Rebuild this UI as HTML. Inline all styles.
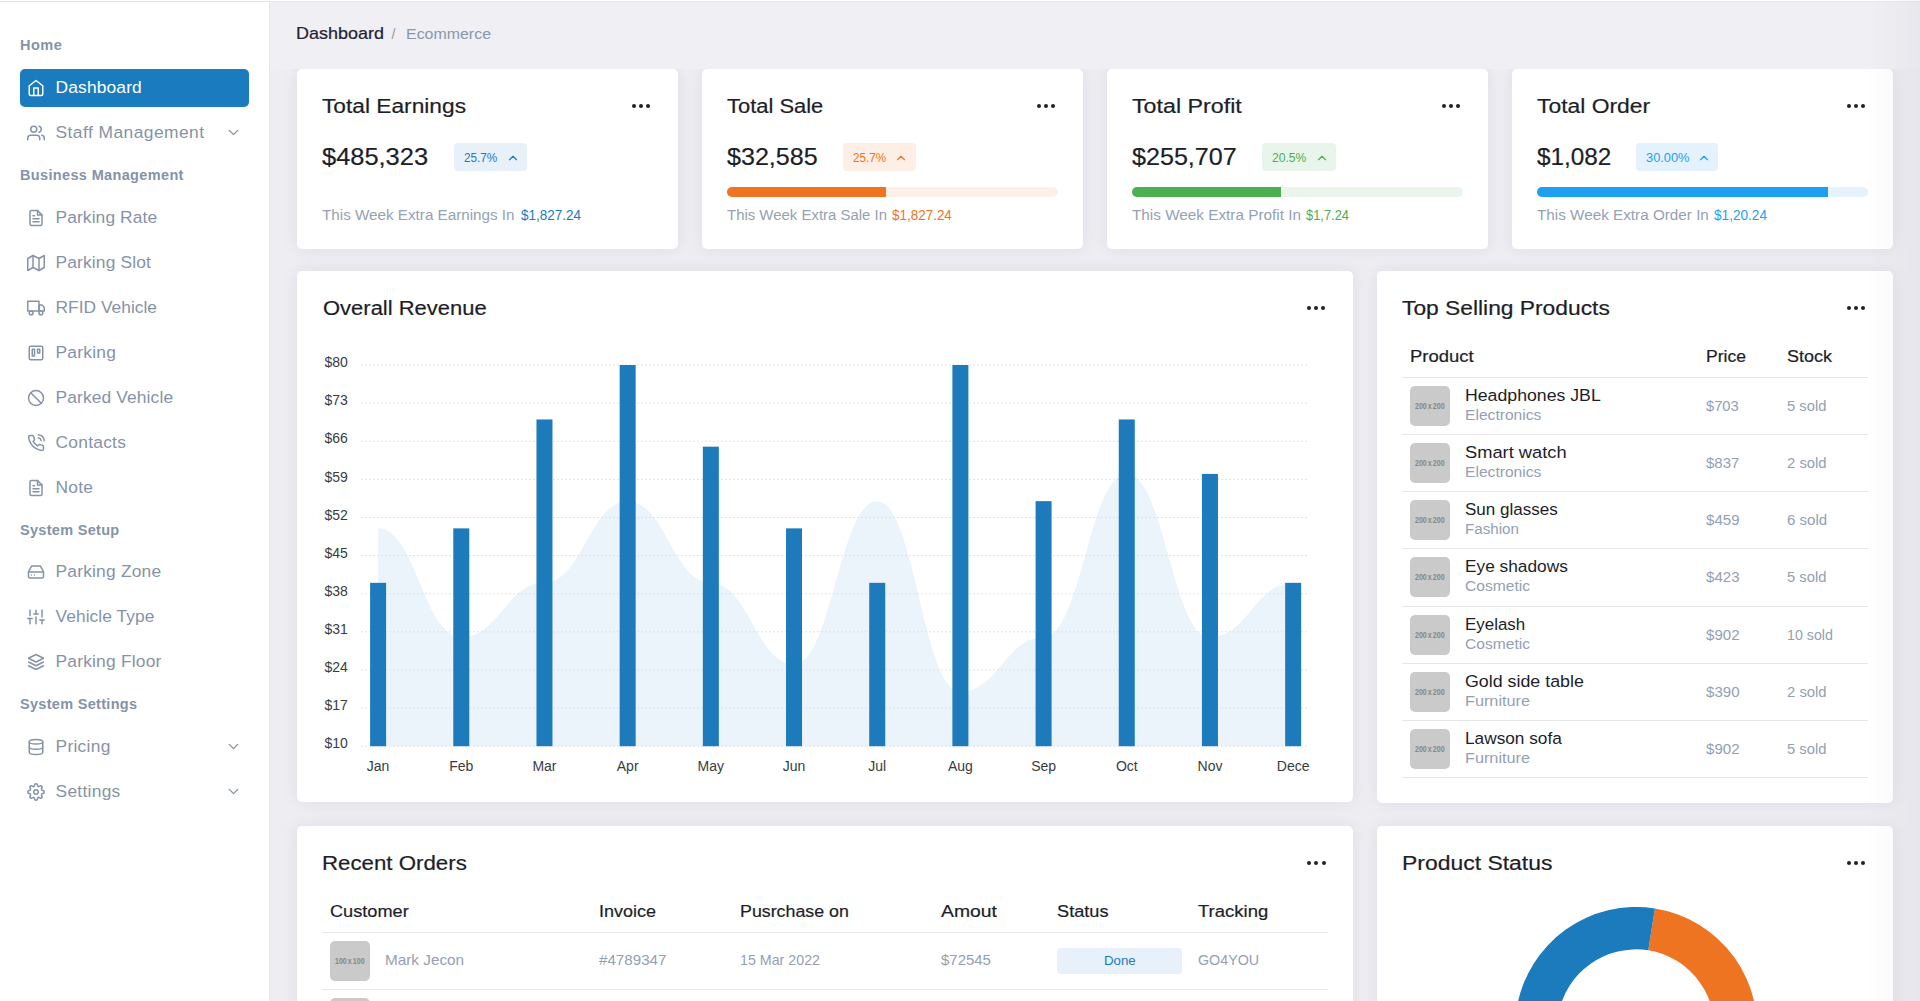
<!DOCTYPE html>
<html><head><meta charset="utf-8"><title>Dashboard</title>
<style>
html,body{margin:0;padding:0;}
body{width:1920px;height:1001px;overflow:hidden;position:relative;background:#ededf2;font-family:"Liberation Sans",sans-serif;}
.t{position:absolute;line-height:1;white-space:nowrap;}
.r{position:absolute;}
.card{position:absolute;background:#fff;border-radius:5px;box-shadow:0 0 16px rgba(40,40,80,0.08);}
svg{position:absolute;overflow:visible;}
</style></head><body>
<div class="r" style="left:0px;top:0px;width:1920px;height:1px;background:#ffffff;"></div>
<div class="r" style="left:0px;top:1px;width:270px;height:1px;background:#e3e3e4;"></div>
<div class="r" style="left:270px;top:1px;width:1650px;height:1px;background:#e8ebf2;"></div>
<div class="r" style="left:0px;top:2px;width:269px;height:999px;background:#ffffff;"></div>
<div class="r" style="left:269px;top:2px;width:1px;height:999px;background:#e7e7ea;"></div>
<div class="t" style="left:20px;top:38px;font-size:14.5px;color:#8493a8;font-weight:700;letter-spacing:0.5px;">Home</div>
<div class="r" style="left:20px;top:69px;width:229px;height:38px;background:#1b7bbf;border-radius:5px;"></div>
<svg style="left:27px;top:79px" width="18" height="18" viewBox="0 0 24 24" fill="none" stroke="#ffffff" stroke-width="2" stroke-linecap="round" stroke-linejoin="round"><path d="M3 9l9-7 9 7v11a2 2 0 0 1-2 2H5a2 2 0 0 1-2-2z"/><polyline points="9 22 9 12 15 12 15 22"/></svg>
<div class="t" style="left:55.5px;top:79px;font-size:17.4px;color:#ffffff;letter-spacing:0.15px;">Dashboard</div>
<svg style="left:27px;top:124.1px" width="18" height="18" viewBox="0 0 24 24" fill="none" stroke="#8693a7" stroke-width="2" stroke-linecap="round" stroke-linejoin="round"><path d="M17 21v-2a4 4 0 0 0-4-4H5a4 4 0 0 0-4 4v2"/><circle cx="9" cy="7" r="4"/><path d="M23 21v-2a4 4 0 0 0-3-3.87"/><path d="M16 3.13a4 4 0 0 1 0 7.75"/></svg>
<div class="t" style="left:55.5px;top:124px;font-size:17.4px;color:#8693a7;letter-spacing:0.45px;">Staff Management</div>
<svg style="left:224.5px;top:124.1px" width="17" height="17" viewBox="0 0 24 24" fill="none" stroke="#8693a7" stroke-width="1.9" stroke-linecap="round" stroke-linejoin="round"><polyline points="6 9 12 15 18 9"/></svg>
<div class="t" style="left:20px;top:168px;font-size:14.5px;color:#8493a8;font-weight:700;letter-spacing:0.35px;">Business Management</div>
<svg style="left:27px;top:208.75px" width="18" height="18" viewBox="0 0 24 24" fill="none" stroke="#8693a7" stroke-width="2" stroke-linecap="round" stroke-linejoin="round"><path d="M14 2H6a2 2 0 0 0-2 2v16a2 2 0 0 0 2 2h12a2 2 0 0 0 2-2V8z"/><polyline points="14 2 14 8 20 8"/><line x1="16" y1="13" x2="8" y2="13"/><line x1="16" y1="17" x2="8" y2="17"/><polyline points="10 9 9 9 8 9"/></svg>
<div class="t" style="left:55.5px;top:209px;font-size:17.4px;color:#8693a7;letter-spacing:0.1px;">Parking Rate</div>
<svg style="left:27px;top:253.89999999999998px" width="18" height="18" viewBox="0 0 24 24" fill="none" stroke="#8693a7" stroke-width="2" stroke-linecap="round" stroke-linejoin="round"><polygon points="1 6 1 22 8 18 16 22 23 18 23 2 16 6 8 2 1 6"/><line x1="8" y1="2" x2="8" y2="18"/><line x1="16" y1="6" x2="16" y2="22"/></svg>
<div class="t" style="left:55.5px;top:254px;font-size:17.4px;color:#8693a7;letter-spacing:0.15px;">Parking Slot</div>
<svg style="left:27px;top:298.9px" width="18" height="18" viewBox="0 0 24 24" fill="none" stroke="#8693a7" stroke-width="2" stroke-linecap="round" stroke-linejoin="round"><rect x="1" y="3" width="15" height="13"/><polygon points="16 8 20 8 23 11 23 16 16 16 16 8"/><circle cx="5.5" cy="18.5" r="2.5"/><circle cx="18.5" cy="18.5" r="2.5"/></svg>
<div class="t" style="left:55.5px;top:299px;font-size:17.4px;color:#8693a7;">RFID Vehicle</div>
<svg style="left:27px;top:343.9px" width="18" height="18" viewBox="0 0 24 24" fill="none" stroke="#8693a7" stroke-width="2" stroke-linecap="round" stroke-linejoin="round"><rect x="3" y="3" width="18" height="18" rx="2" ry="2"/><rect x="7" y="7" width="3" height="9"/><rect x="14" y="7" width="3" height="5"/></svg>
<div class="t" style="left:55.5px;top:344px;font-size:17.4px;color:#8693a7;letter-spacing:0.25px;">Parking</div>
<svg style="left:27px;top:388.9px" width="18" height="18" viewBox="0 0 24 24" fill="none" stroke="#8693a7" stroke-width="2" stroke-linecap="round" stroke-linejoin="round"><circle cx="12" cy="12" r="10"/><line x1="4.93" y1="4.93" x2="19.07" y2="19.07"/></svg>
<div class="t" style="left:55.5px;top:389px;font-size:17.4px;color:#8693a7;letter-spacing:0.12px;">Parked Vehicle</div>
<svg style="left:27px;top:433.8px" width="18" height="18" viewBox="0 0 24 24" fill="none" stroke="#8693a7" stroke-width="2" stroke-linecap="round" stroke-linejoin="round"><path d="M15.05 5A5 5 0 0 1 19 8.95M15.05 1A9 9 0 0 1 23 8.94m-1 7.98v3a2 2 0 0 1-2.18 2 19.79 19.79 0 0 1-8.63-3.070 19.5 19.5 0 0 1-6-6 19.79 19.79 0 0 1-3.07-8.67A2 2 0 0 1 4.11 2h3a2 2 0 0 1 2 1.72 12.84 12.84 0 0 0 .7 2.81 2 2 0 0 1-.45 2.11L8.09 9.91a16 16 0 0 0 6 6l1.27-1.27a2 2 0 0 1 2.11-.45 12.84 12.84 0 0 0 2.81.7A2 2 0 0 1 22 16.92z"/></svg>
<div class="t" style="left:55.5px;top:434px;font-size:17.4px;color:#8693a7;letter-spacing:0.25px;">Contacts</div>
<svg style="left:27px;top:478.9px" width="18" height="18" viewBox="0 0 24 24" fill="none" stroke="#8693a7" stroke-width="2" stroke-linecap="round" stroke-linejoin="round"><path d="M14 2H6a2 2 0 0 0-2 2v16a2 2 0 0 0 2 2h12a2 2 0 0 0 2-2V8z"/><polyline points="14 2 14 8 20 8"/><line x1="16" y1="13" x2="8" y2="13"/><line x1="16" y1="17" x2="8" y2="17"/><polyline points="10 9 9 9 8 9"/></svg>
<div class="t" style="left:55.5px;top:479px;font-size:17.4px;color:#8693a7;letter-spacing:0.2px;">Note</div>
<div class="t" style="left:20px;top:523px;font-size:14.5px;color:#8493a8;font-weight:700;letter-spacing:0.3px;">System Setup</div>
<svg style="left:27px;top:563px" width="18" height="18" viewBox="0 0 24 24" fill="none" stroke="#8693a7" stroke-width="2" stroke-linecap="round" stroke-linejoin="round"><line x1="22" y1="12" x2="2" y2="12"/><path d="M5.45 5.11L2 12v6a2 2 0 0 0 2 2h16a2 2 0 0 0 2-2v-6l-3.45-6.89A2 2 0 0 0 16.76 4H7.24a2 2 0 0 0-1.79 1.11z"/><line x1="6" y1="16" x2="6.01" y2="16"/><line x1="10" y1="16" x2="10.01" y2="16"/></svg>
<div class="t" style="left:55.5px;top:563px;font-size:17.4px;color:#8693a7;letter-spacing:0.2px;">Parking Zone</div>
<svg style="left:27px;top:608.3px" width="18" height="18" viewBox="0 0 24 24" fill="none" stroke="#8693a7" stroke-width="2" stroke-linecap="round" stroke-linejoin="round"><line x1="4" y1="21" x2="4" y2="14"/><line x1="4" y1="10" x2="4" y2="3"/><line x1="12" y1="21" x2="12" y2="12"/><line x1="12" y1="8" x2="12" y2="3"/><line x1="20" y1="21" x2="20" y2="16"/><line x1="20" y1="12" x2="20" y2="3"/><line x1="1" y1="14" x2="7" y2="14"/><line x1="9" y1="8" x2="15" y2="8"/><line x1="17" y1="16" x2="23" y2="16"/></svg>
<div class="t" style="left:55.5px;top:608px;font-size:17.4px;color:#8693a7;letter-spacing:0.05px;">Vehicle Type</div>
<svg style="left:27px;top:653px" width="18" height="18" viewBox="0 0 24 24" fill="none" stroke="#8693a7" stroke-width="2" stroke-linecap="round" stroke-linejoin="round"><polygon points="12 2 2 7 12 12 22 7 12 2"/><polyline points="2 17 12 22 22 17"/><polyline points="2 12 12 17 22 12"/></svg>
<div class="t" style="left:55.5px;top:653px;font-size:17.4px;color:#8693a7;letter-spacing:0.2px;">Parking Floor</div>
<div class="t" style="left:20px;top:697px;font-size:14.5px;color:#8493a8;font-weight:700;letter-spacing:0.3px;">System Settings</div>
<svg style="left:27px;top:738.3px" width="18" height="18" viewBox="0 0 24 24" fill="none" stroke="#8693a7" stroke-width="2" stroke-linecap="round" stroke-linejoin="round"><ellipse cx="12" cy="5" rx="9" ry="3"/><path d="M21 12c0 1.66-4 3-9 3s-9-1.34-9-3"/><path d="M3 5v14c0 1.66 4 3 9 3s9-1.34 9-3V5"/></svg>
<div class="t" style="left:55.5px;top:738px;font-size:17.4px;color:#8693a7;letter-spacing:0.28px;">Pricing</div>
<svg style="left:224.5px;top:738.3px" width="17" height="17" viewBox="0 0 24 24" fill="none" stroke="#8693a7" stroke-width="1.9" stroke-linecap="round" stroke-linejoin="round"><polyline points="6 9 12 15 18 9"/></svg>
<svg style="left:27px;top:783.3px" width="18" height="18" viewBox="0 0 24 24" fill="none" stroke="#8693a7" stroke-width="2" stroke-linecap="round" stroke-linejoin="round"><circle cx="12" cy="12" r="3"/><path d="M19.4 15a1.65 1.65 0 0 0 .33 1.82l.06.06a2 2 0 0 1 0 2.830 2 2 0 0 1-2.83 0l-.06-.06a1.65 1.65 0 0 0-1.82-.33 1.65 1.65 0 0 0-1 1.51V21a2 2 0 0 1-2 2 2 2 0 0 1-2-2v-.09A1.65 1.65 0 0 0 9 19.4a1.65 1.65 0 0 0-1.82.33l-.06.06a2 2 0 0 1-2.83 0 2 2 0 0 1 0-2.83l.06-.06a1.65 1.65 0 0 0 .33-1.82 1.65 1.65 0 0 0-1.51-1H3a2 2 0 0 1-2-2 2 2 0 0 1 2-2h.09A1.65 1.65 0 0 0 4.6 9a1.65 1.65 0 0 0-.33-1.82l-.06-.06a2 2 0 0 1 0-2.83 2 2 0 0 1 2.83 0l.06.06a1.65 1.65 0 0 0 1.82.33H9a1.65 1.65 0 0 0 1-1.51V3a2 2 0 0 1 2-2 2 2 0 0 1 2 2v.09a1.65 1.65 0 0 0 1 1.51 1.65 1.65 0 0 0 1.82-.33l.06-.06a2 2 0 0 1 2.83 0 2 2 0 0 1 0 2.83l-.06.06a1.65 1.65 0 0 0-.33 1.82V9a1.65 1.65 0 0 0 1.51 1H21a2 2 0 0 1 2 2 2 2 0 0 1-2 2h-.09a1.65 1.65 0 0 0-1.51 1z"/></svg>
<div class="t" style="left:55.5px;top:783px;font-size:17.4px;color:#8693a7;letter-spacing:0.28px;">Settings</div>
<svg style="left:224.5px;top:783.3px" width="17" height="17" viewBox="0 0 24 24" fill="none" stroke="#8693a7" stroke-width="1.9" stroke-linecap="round" stroke-linejoin="round"><polyline points="6 9 12 15 18 9"/></svg>
<div class="card" style="left:297px;top:69px;width:381px;height:180px"></div>
<div class="t" style="left:322.0px;top:96px;font-size:20px;color:#1d1e28;-webkit-text-stroke:0.2px currentColor;transform:scaleX(1.1361);transform-origin:0 0;">Total Earnings</div>
<div class="r" style="left:631.90px;top:103.80px;width:4px;height:4px;border-radius:50%;background:#222"></div>
<div class="r" style="left:639.00px;top:103.80px;width:4px;height:4px;border-radius:50%;background:#222"></div>
<div class="r" style="left:646.10px;top:103.80px;width:4px;height:4px;border-radius:50%;background:#222"></div>
<div class="t" style="left:322.4px;top:145px;font-size:24px;color:#1d1e28;-webkit-text-stroke:0.2px currentColor;transform:scaleX(1.0592);transform-origin:0 0;">$485,323</div>
<div class="r" style="left:454.2px;top:143px;width:72.8px;height:28px;background:#e8f1f9;border-radius:4px;"></div>
<div class="t" style="left:464.2px;top:152px;font-size:12.3px;color:#1b7bbf;transform:scaleX(0.9550);transform-origin:0 0;">25.7%</div>
<svg style="left:505.85px;top:150.75px" width="14" height="14" viewBox="0 0 24 24" fill="none" stroke="#1b7bbf" stroke-width="2" stroke-linecap="round" stroke-linejoin="round"><polyline points="18 15 12 9 6 15"/></svg>
<div class="t" style="left:322.3px;top:207px;font-size:15.2px;color:#95a1b4;transform:scaleX(1.0020);transform-origin:0 0;">This Week Extra Earnings In</div>
<div class="t" style="left:520.7px;top:207px;font-size:15.2px;color:#1b7bbf;transform:scaleX(0.8900);transform-origin:0 0;">$1,827.24</div>
<div class="card" style="left:702px;top:69px;width:381px;height:180px"></div>
<div class="t" style="left:727.0px;top:96px;font-size:20px;color:#1d1e28;-webkit-text-stroke:0.2px currentColor;transform:scaleX(1.0962);transform-origin:0 0;">Total Sale</div>
<div class="r" style="left:1036.90px;top:103.80px;width:4px;height:4px;border-radius:50%;background:#222"></div>
<div class="r" style="left:1044.00px;top:103.80px;width:4px;height:4px;border-radius:50%;background:#222"></div>
<div class="r" style="left:1051.10px;top:103.80px;width:4px;height:4px;border-radius:50%;background:#222"></div>
<div class="t" style="left:727.4px;top:145px;font-size:24px;color:#1d1e28;-webkit-text-stroke:0.2px currentColor;transform:scaleX(1.0454);transform-origin:0 0;">$32,585</div>
<div class="r" style="left:843.1px;top:143px;width:72.5px;height:28px;background:#fdefe6;border-radius:4px;"></div>
<div class="t" style="left:853.1px;top:152px;font-size:12.3px;color:#ee7421;transform:scaleX(0.9464);transform-origin:0 0;">25.7%</div>
<svg style="left:894.45px;top:150.75px" width="14" height="14" viewBox="0 0 24 24" fill="none" stroke="#ee7421" stroke-width="2" stroke-linecap="round" stroke-linejoin="round"><polyline points="18 15 12 9 6 15"/></svg>
<div class="r" style="left:727px;top:187px;width:331px;height:10px;background:#fdf0e7;border-radius:5px;"></div>
<div class="r" style="left:727px;top:187px;width:159px;height:10px;background:#ee7421;border-radius:5px;border-top-right-radius:0;border-bottom-right-radius:0;"></div>
<div class="t" style="left:727.0px;top:207px;font-size:15.2px;color:#95a1b4;transform:scaleX(0.9837);transform-origin:0 0;">This Week Extra Sale In</div>
<div class="t" style="left:892.4px;top:207px;font-size:15.2px;color:#ee7421;transform:scaleX(0.8856);transform-origin:0 0;">$1,827.24</div>
<div class="card" style="left:1107px;top:69px;width:381px;height:180px"></div>
<div class="t" style="left:1132.0px;top:96px;font-size:20px;color:#1d1e28;-webkit-text-stroke:0.2px currentColor;transform:scaleX(1.1619);transform-origin:0 0;">Total Profit</div>
<div class="r" style="left:1441.90px;top:103.80px;width:4px;height:4px;border-radius:50%;background:#222"></div>
<div class="r" style="left:1449.00px;top:103.80px;width:4px;height:4px;border-radius:50%;background:#222"></div>
<div class="r" style="left:1456.10px;top:103.80px;width:4px;height:4px;border-radius:50%;background:#222"></div>
<div class="t" style="left:1132.4px;top:145px;font-size:24px;color:#1d1e28;-webkit-text-stroke:0.2px currentColor;transform:scaleX(1.0462);transform-origin:0 0;">$255,707</div>
<div class="r" style="left:1262.3px;top:143px;width:73.5px;height:28px;background:#e9f5ea;border-radius:4px;"></div>
<div class="t" style="left:1272.3px;top:152px;font-size:12.3px;color:#4caf50;transform:scaleX(0.9836);transform-origin:0 0;">20.5%</div>
<svg style="left:1314.65px;top:150.75px" width="14" height="14" viewBox="0 0 24 24" fill="none" stroke="#4caf50" stroke-width="2" stroke-linecap="round" stroke-linejoin="round"><polyline points="18 15 12 9 6 15"/></svg>
<div class="r" style="left:1132px;top:187px;width:331px;height:10px;background:#ebf5ec;border-radius:5px;"></div>
<div class="r" style="left:1132px;top:187px;width:149px;height:10px;background:#4caf50;border-radius:5px;border-top-right-radius:0;border-bottom-right-radius:0;"></div>
<div class="t" style="left:1132.0px;top:207px;font-size:15.2px;color:#95a1b4;transform:scaleX(1.0077);transform-origin:0 0;">This Week Extra Profit In</div>
<div class="t" style="left:1306.4px;top:207px;font-size:15.2px;color:#4caf50;transform:scaleX(0.8476);transform-origin:0 0;">$1,7.24</div>
<div class="card" style="left:1512px;top:69px;width:381px;height:180px"></div>
<div class="t" style="left:1537.0px;top:96px;font-size:20px;color:#1d1e28;-webkit-text-stroke:0.2px currentColor;transform:scaleX(1.1440);transform-origin:0 0;">Total Order</div>
<div class="r" style="left:1846.90px;top:103.80px;width:4px;height:4px;border-radius:50%;background:#222"></div>
<div class="r" style="left:1854.00px;top:103.80px;width:4px;height:4px;border-radius:50%;background:#222"></div>
<div class="r" style="left:1861.10px;top:103.80px;width:4px;height:4px;border-radius:50%;background:#222"></div>
<div class="t" style="left:1537.4px;top:145px;font-size:24px;color:#1d1e28;-webkit-text-stroke:0.2px currentColor;transform:scaleX(1.0125);transform-origin:0 0;">$1,082</div>
<div class="r" style="left:1636.1px;top:143px;width:82.4px;height:28px;background:#e3f2fd;border-radius:4px;"></div>
<div class="t" style="left:1646.1px;top:152px;font-size:12.3px;color:#1e9ff2;transform:scaleX(1.0425);transform-origin:0 0;">30.00%</div>
<svg style="left:1697.35px;top:150.75px" width="14" height="14" viewBox="0 0 24 24" fill="none" stroke="#1e9ff2" stroke-width="2" stroke-linecap="round" stroke-linejoin="round"><polyline points="18 15 12 9 6 15"/></svg>
<div class="r" style="left:1537px;top:187px;width:331px;height:10px;background:#e6f3fd;border-radius:5px;"></div>
<div class="r" style="left:1537px;top:187px;width:291px;height:10px;background:#1e9ff2;border-radius:5px;border-top-right-radius:0;border-bottom-right-radius:0;"></div>
<div class="t" style="left:1537.0px;top:207px;font-size:15.2px;color:#95a1b4;transform:scaleX(1.0047);transform-origin:0 0;">This Week Extra Order In</div>
<div class="t" style="left:1714.1px;top:207px;font-size:15.2px;color:#1e9ff2;transform:scaleX(0.8958);transform-origin:0 0;">$1,20.24</div>
<div class="card" style="left:297px;top:271px;width:1056px;height:531px"></div>
<div class="t" style="left:322.5px;top:298px;font-size:20px;color:#1d1e28;-webkit-text-stroke:0.2px currentColor;transform:scaleX(1.0990);transform-origin:0 0;">Overall Revenue</div>
<div class="r" style="left:1307.20px;top:305.80px;width:4px;height:4px;border-radius:50%;background:#222"></div>
<div class="r" style="left:1314.30px;top:305.80px;width:4px;height:4px;border-radius:50%;background:#222"></div>
<div class="r" style="left:1321.40px;top:305.80px;width:4px;height:4px;border-radius:50%;background:#222"></div>
<svg style="left:0;top:0" width="1920" height="1001"><path d="M378.10,528.37 C415.53,528.37 423.85,637.29 461.29,637.29 C498.72,637.29 507.04,582.83 544.47,582.83 C581.91,582.83 590.22,501.14 627.66,501.14 C665.09,501.14 673.41,582.83 710.84,582.83 C748.28,582.83 756.60,664.51 794.03,664.51 C831.46,664.51 839.78,501.14 877.22,501.14 C914.65,501.14 922.97,691.74 960.40,691.74 C997.84,691.74 1006.15,637.29 1043.59,637.29 C1081.02,637.29 1089.34,473.91 1126.77,473.91 C1164.21,473.91 1172.53,637.29 1209.96,637.29 C1247.39,637.29 1255.71,582.83 1293.15,582.83 L1293.15,746.2 L378.10,746.2 Z" fill="#ebf3fb"/><line x1="361" y1="365.00" x2="1308" y2="365.00" stroke="#e2e2e2" stroke-width="1" stroke-dasharray="2,2"/><line x1="361" y1="403.12" x2="1308" y2="403.12" stroke="#e2e2e2" stroke-width="1" stroke-dasharray="2,2"/><line x1="361" y1="441.24" x2="1308" y2="441.24" stroke="#e2e2e2" stroke-width="1" stroke-dasharray="2,2"/><line x1="361" y1="479.36" x2="1308" y2="479.36" stroke="#e2e2e2" stroke-width="1" stroke-dasharray="2,2"/><line x1="361" y1="517.48" x2="1308" y2="517.48" stroke="#e2e2e2" stroke-width="1" stroke-dasharray="2,2"/><line x1="361" y1="555.60" x2="1308" y2="555.60" stroke="#e2e2e2" stroke-width="1" stroke-dasharray="2,2"/><line x1="361" y1="593.72" x2="1308" y2="593.72" stroke="#e2e2e2" stroke-width="1" stroke-dasharray="2,2"/><line x1="361" y1="631.84" x2="1308" y2="631.84" stroke="#e2e2e2" stroke-width="1" stroke-dasharray="2,2"/><line x1="361" y1="669.96" x2="1308" y2="669.96" stroke="#e2e2e2" stroke-width="1" stroke-dasharray="2,2"/><line x1="361" y1="708.08" x2="1308" y2="708.08" stroke="#e2e2e2" stroke-width="1" stroke-dasharray="2,2"/><line x1="361" y1="746.20" x2="1308" y2="746.20" stroke="#e2e2e2" stroke-width="1" stroke-dasharray="2,2"/><rect x="370.10" y="582.83" width="16" height="163.37" fill="#1d7bbc"/><rect x="453.29" y="528.37" width="16" height="217.83" fill="#1d7bbc"/><rect x="536.47" y="419.46" width="16" height="326.74" fill="#1d7bbc"/><rect x="619.66" y="365.00" width="16" height="381.20" fill="#1d7bbc"/><rect x="702.84" y="446.69" width="16" height="299.51" fill="#1d7bbc"/><rect x="786.03" y="528.37" width="16" height="217.83" fill="#1d7bbc"/><rect x="869.22" y="582.83" width="16" height="163.37" fill="#1d7bbc"/><rect x="952.40" y="365.00" width="16" height="381.20" fill="#1d7bbc"/><rect x="1035.59" y="501.14" width="16" height="245.06" fill="#1d7bbc"/><rect x="1118.77" y="419.46" width="16" height="326.74" fill="#1d7bbc"/><rect x="1201.96" y="473.91" width="16" height="272.29" fill="#1d7bbc"/><rect x="1285.15" y="582.83" width="16" height="163.37" fill="#1d7bbc"/></svg>
<div class="t" style="left:324.4px;top:355px;font-size:14px;color:#373d3f;">$80</div>
<div class="t" style="left:324.4px;top:393px;font-size:14px;color:#373d3f;">$73</div>
<div class="t" style="left:324.4px;top:431px;font-size:14px;color:#373d3f;">$66</div>
<div class="t" style="left:324.4px;top:470px;font-size:14px;color:#373d3f;">$59</div>
<div class="t" style="left:324.4px;top:508px;font-size:14px;color:#373d3f;">$52</div>
<div class="t" style="left:324.4px;top:546px;font-size:14px;color:#373d3f;">$45</div>
<div class="t" style="left:324.4px;top:584px;font-size:14px;color:#373d3f;">$38</div>
<div class="t" style="left:324.4px;top:622px;font-size:14px;color:#373d3f;">$31</div>
<div class="t" style="left:324.4px;top:660px;font-size:14px;color:#373d3f;">$24</div>
<div class="t" style="left:324.4px;top:698px;font-size:14px;color:#373d3f;">$17</div>
<div class="t" style="left:324.4px;top:736px;font-size:14px;color:#373d3f;">$10</div>
<div class="t" style="left:366.81px;top:759px;font-size:14px;color:#373d3f;">Jan</div>
<div class="t" style="left:449.23px;top:759px;font-size:14px;color:#373d3f;">Feb</div>
<div class="t" style="left:532.41px;top:759px;font-size:14px;color:#373d3f;">Mar</div>
<div class="t" style="left:616.77px;top:759px;font-size:14px;color:#373d3f;">Apr</div>
<div class="t" style="left:697.61px;top:759px;font-size:14px;color:#373d3f;">May</div>
<div class="t" style="left:782.74px;top:759px;font-size:14px;color:#373d3f;">Jun</div>
<div class="t" style="left:868.27px;top:759px;font-size:14px;color:#373d3f;">Jul</div>
<div class="t" style="left:947.94px;top:759px;font-size:14px;color:#373d3f;">Aug</div>
<div class="t" style="left:1031.13px;top:759px;font-size:14px;color:#373d3f;">Sep</div>
<div class="t" style="left:1115.89px;top:759px;font-size:14px;color:#373d3f;">Oct</div>
<div class="t" style="left:1197.52px;top:759px;font-size:14px;color:#373d3f;">Nov</div>
<div class="t" style="left:1276.8px;top:759px;font-size:14px;color:#373d3f;">Dece</div>
<div class="card" style="left:1377px;top:271px;width:516px;height:532px"></div>
<div class="t" style="left:1402.2px;top:298px;font-size:20px;color:#1d1e28;-webkit-text-stroke:0.2px currentColor;transform:scaleX(1.1396);transform-origin:0 0;">Top Selling Products</div>
<div class="r" style="left:1846.90px;top:305.80px;width:4px;height:4px;border-radius:50%;background:#222"></div>
<div class="r" style="left:1854.00px;top:305.80px;width:4px;height:4px;border-radius:50%;background:#222"></div>
<div class="r" style="left:1861.10px;top:305.80px;width:4px;height:4px;border-radius:50%;background:#222"></div>
<div class="t" style="left:1409.8px;top:348px;font-size:16.3px;color:#1d1e28;-webkit-text-stroke:0.2px currentColor;transform:scaleX(1.1336);transform-origin:0 0;">Product</div>
<div class="t" style="left:1706.0px;top:348px;font-size:16.3px;color:#1d1e28;-webkit-text-stroke:0.2px currentColor;transform:scaleX(1.0775);transform-origin:0 0;">Price</div>
<div class="t" style="left:1786.8px;top:348px;font-size:16.3px;color:#1d1e28;-webkit-text-stroke:0.2px currentColor;transform:scaleX(1.1032);transform-origin:0 0;">Stock</div>
<div class="r" style="left:1402px;top:377px;width:466px;height:1px;background:#e6e6e9;"></div>
<div class="r" style="left:1402px;top:434px;width:466px;height:1px;background:#e6e6e9;"></div>
<div class="r" style="left:1410px;top:386px;width:40px;height:40px;background:#cacaca;border-radius:5px"></div>
<div class="t" style="left:1415.45px;top:402px;font-size:8.8px;color:#878787;font-weight:700;transform:scaleX(0.8047);transform-origin:0 0;">200<span style="letter-spacing:-1.2px"> </span>x<span style="letter-spacing:-1.2px"> </span>200</div>
<div class="t" style="left:1464.8px;top:387px;font-size:17.4px;color:#1d1e28;transform:scaleX(1.0172);transform-origin:0 0;">Headphones JBL</div>
<div class="t" style="left:1464.8px;top:407px;font-size:15.3px;color:#94a0b2;transform:scaleX(1.0212);transform-origin:0 0;">Electronics</div>
<div class="t" style="left:1706.0px;top:398px;font-size:15.1px;color:#94a0b2;transform:scaleX(0.9733);transform-origin:0 0;">$703</div>
<div class="t" style="left:1786.8px;top:398px;font-size:15.1px;color:#94a0b2;transform:scaleX(0.9782);transform-origin:0 0;">5 sold</div>
<div class="r" style="left:1402px;top:491px;width:466px;height:1px;background:#e6e6e9;"></div>
<div class="r" style="left:1410px;top:443px;width:40px;height:40px;background:#cacaca;border-radius:5px"></div>
<div class="t" style="left:1415.45px;top:459px;font-size:8.8px;color:#878787;font-weight:700;transform:scaleX(0.8047);transform-origin:0 0;">200<span style="letter-spacing:-1.2px"> </span>x<span style="letter-spacing:-1.2px"> </span>200</div>
<div class="t" style="left:1464.8px;top:444px;font-size:17.4px;color:#1d1e28;transform:scaleX(1.0517);transform-origin:0 0;">Smart watch</div>
<div class="t" style="left:1464.8px;top:464px;font-size:15.3px;color:#94a0b2;transform:scaleX(1.0212);transform-origin:0 0;">Electronics</div>
<div class="t" style="left:1706.0px;top:455px;font-size:15.1px;color:#94a0b2;transform:scaleX(0.9941);transform-origin:0 0;">$837</div>
<div class="t" style="left:1786.8px;top:455px;font-size:15.1px;color:#94a0b2;transform:scaleX(0.9831);transform-origin:0 0;">2 sold</div>
<div class="r" style="left:1402px;top:548px;width:466px;height:1px;background:#e6e6e9;"></div>
<div class="r" style="left:1410px;top:500px;width:40px;height:40px;background:#cacaca;border-radius:5px"></div>
<div class="t" style="left:1415.45px;top:516px;font-size:8.8px;color:#878787;font-weight:700;transform:scaleX(0.8047);transform-origin:0 0;">200<span style="letter-spacing:-1.2px"> </span>x<span style="letter-spacing:-1.2px"> </span>200</div>
<div class="t" style="left:1464.8px;top:501px;font-size:17.4px;color:#1d1e28;transform:scaleX(0.9801);transform-origin:0 0;">Sun glasses</div>
<div class="t" style="left:1464.8px;top:521px;font-size:15.3px;color:#94a0b2;transform:scaleX(0.9921);transform-origin:0 0;">Fashion</div>
<div class="t" style="left:1706.0px;top:512px;font-size:15.1px;color:#94a0b2;transform:scaleX(1.0001);transform-origin:0 0;">$459</div>
<div class="t" style="left:1786.8px;top:512px;font-size:15.1px;color:#94a0b2;transform:scaleX(0.9980);transform-origin:0 0;">6 sold</div>
<div class="r" style="left:1402px;top:606px;width:466px;height:1px;background:#e6e6e9;"></div>
<div class="r" style="left:1410px;top:557px;width:40px;height:40px;background:#cacaca;border-radius:5px"></div>
<div class="t" style="left:1415.45px;top:573px;font-size:8.8px;color:#878787;font-weight:700;transform:scaleX(0.8047);transform-origin:0 0;">200<span style="letter-spacing:-1.2px"> </span>x<span style="letter-spacing:-1.2px"> </span>200</div>
<div class="t" style="left:1464.8px;top:558px;font-size:17.4px;color:#1d1e28;transform:scaleX(0.9943);transform-origin:0 0;">Eye shadows</div>
<div class="t" style="left:1464.8px;top:578px;font-size:15.3px;color:#94a0b2;transform:scaleX(1.0194);transform-origin:0 0;">Cosmetic</div>
<div class="t" style="left:1706.0px;top:569px;font-size:15.1px;color:#94a0b2;transform:scaleX(1.0001);transform-origin:0 0;">$423</div>
<div class="t" style="left:1786.8px;top:569px;font-size:15.1px;color:#94a0b2;transform:scaleX(0.9782);transform-origin:0 0;">5 sold</div>
<div class="r" style="left:1402px;top:663px;width:466px;height:1px;background:#e6e6e9;"></div>
<div class="r" style="left:1410px;top:615px;width:40px;height:40px;background:#cacaca;border-radius:5px"></div>
<div class="t" style="left:1415.45px;top:631px;font-size:8.8px;color:#878787;font-weight:700;transform:scaleX(0.8047);transform-origin:0 0;">200<span style="letter-spacing:-1.2px"> </span>x<span style="letter-spacing:-1.2px"> </span>200</div>
<div class="t" style="left:1464.8px;top:616px;font-size:17.4px;color:#1d1e28;transform:scaleX(0.9725);transform-origin:0 0;">Eyelash</div>
<div class="t" style="left:1464.8px;top:636px;font-size:15.3px;color:#94a0b2;transform:scaleX(1.0194);transform-origin:0 0;">Cosmetic</div>
<div class="t" style="left:1706.0px;top:627px;font-size:15.1px;color:#94a0b2;transform:scaleX(1.0001);transform-origin:0 0;">$902</div>
<div class="t" style="left:1786.8px;top:627px;font-size:15.1px;color:#94a0b2;transform:scaleX(0.9426);transform-origin:0 0;">10 sold</div>
<div class="r" style="left:1402px;top:720px;width:466px;height:1px;background:#e6e6e9;"></div>
<div class="r" style="left:1410px;top:672px;width:40px;height:40px;background:#cacaca;border-radius:5px"></div>
<div class="t" style="left:1415.45px;top:688px;font-size:8.8px;color:#878787;font-weight:700;transform:scaleX(0.8047);transform-origin:0 0;">200<span style="letter-spacing:-1.2px"> </span>x<span style="letter-spacing:-1.2px"> </span>200</div>
<div class="t" style="left:1464.8px;top:673px;font-size:17.4px;color:#1d1e28;transform:scaleX(1.0245);transform-origin:0 0;">Gold side table</div>
<div class="t" style="left:1464.8px;top:693px;font-size:15.3px;color:#94a0b2;transform:scaleX(1.0614);transform-origin:0 0;">Furniture</div>
<div class="t" style="left:1706.0px;top:684px;font-size:15.1px;color:#94a0b2;transform:scaleX(1.0001);transform-origin:0 0;">$390</div>
<div class="t" style="left:1786.8px;top:684px;font-size:15.1px;color:#94a0b2;transform:scaleX(0.9831);transform-origin:0 0;">2 sold</div>
<div class="r" style="left:1402px;top:777px;width:466px;height:1px;background:#e6e6e9;"></div>
<div class="r" style="left:1410px;top:729px;width:40px;height:40px;background:#cacaca;border-radius:5px"></div>
<div class="t" style="left:1415.45px;top:745px;font-size:8.8px;color:#878787;font-weight:700;transform:scaleX(0.8047);transform-origin:0 0;">200<span style="letter-spacing:-1.2px"> </span>x<span style="letter-spacing:-1.2px"> </span>200</div>
<div class="t" style="left:1464.8px;top:730px;font-size:17.4px;color:#1d1e28;transform:scaleX(0.9914);transform-origin:0 0;">Lawson sofa</div>
<div class="t" style="left:1464.8px;top:750px;font-size:15.3px;color:#94a0b2;transform:scaleX(1.0614);transform-origin:0 0;">Furniture</div>
<div class="t" style="left:1706.0px;top:741px;font-size:15.1px;color:#94a0b2;transform:scaleX(1.0001);transform-origin:0 0;">$902</div>
<div class="t" style="left:1786.8px;top:741px;font-size:15.1px;color:#94a0b2;transform:scaleX(0.9782);transform-origin:0 0;">5 sold</div>
<div class="card" style="left:297px;top:826px;width:1056px;height:260px"></div>
<div class="t" style="left:322.3px;top:853px;font-size:20px;color:#1d1e28;-webkit-text-stroke:0.2px currentColor;transform:scaleX(1.1134);transform-origin:0 0;">Recent Orders</div>
<div class="r" style="left:1307.30px;top:860.90px;width:4px;height:4px;border-radius:50%;background:#222"></div>
<div class="r" style="left:1314.40px;top:860.90px;width:4px;height:4px;border-radius:50%;background:#222"></div>
<div class="r" style="left:1321.50px;top:860.90px;width:4px;height:4px;border-radius:50%;background:#222"></div>
<div class="t" style="left:330.3px;top:903px;font-size:16.3px;color:#1d1e28;-webkit-text-stroke:0.2px currentColor;transform:scaleX(1.1152);transform-origin:0 0;">Customer</div>
<div class="t" style="left:599.3px;top:903px;font-size:16.3px;color:#1d1e28;-webkit-text-stroke:0.2px currentColor;transform:scaleX(1.1040);transform-origin:0 0;">Invoice</div>
<div class="t" style="left:740.0px;top:903px;font-size:16.3px;color:#1d1e28;-webkit-text-stroke:0.2px currentColor;transform:scaleX(1.0936);transform-origin:0 0;">Pusrchase on</div>
<div class="t" style="left:941.0px;top:903px;font-size:16.3px;color:#1d1e28;-webkit-text-stroke:0.2px currentColor;transform:scaleX(1.1867);transform-origin:0 0;">Amout</div>
<div class="t" style="left:1057.2px;top:903px;font-size:16.3px;color:#1d1e28;-webkit-text-stroke:0.2px currentColor;transform:scaleX(1.1166);transform-origin:0 0;">Status</div>
<div class="t" style="left:1197.8px;top:903px;font-size:16.3px;color:#1d1e28;-webkit-text-stroke:0.2px currentColor;transform:scaleX(1.1357);transform-origin:0 0;">Tracking</div>
<div class="r" style="left:322px;top:932px;width:1006px;height:1px;background:#e6e6e9;"></div>
<div class="r" style="left:330px;top:941px;width:40px;height:40px;background:#cacaca;border-radius:5px"></div>
<div class="t" style="left:335.45px;top:957px;font-size:8.8px;color:#878787;font-weight:700;transform:scaleX(0.8047);transform-origin:0 0;">100<span style="letter-spacing:-1.2px"> </span>x<span style="letter-spacing:-1.2px"> </span>100</div>
<div class="t" style="left:384.9px;top:952px;font-size:15.0px;color:#94a0b2;transform:scaleX(1.0205);transform-origin:0 0;">Mark Jecon</div>
<div class="t" style="left:599.3px;top:952px;font-size:15.0px;color:#94a0b2;transform:scaleX(1.0112);transform-origin:0 0;">#4789347</div>
<div class="t" style="left:740.0px;top:952px;font-size:15.0px;color:#94a0b2;transform:scaleX(0.9498);transform-origin:0 0;">15 Mar 2022</div>
<div class="t" style="left:941.0px;top:952px;font-size:15.0px;color:#94a0b2;transform:scaleX(0.9968);transform-origin:0 0;">$72545</div>
<div class="r" style="left:1057px;top:948px;width:124.5px;height:26px;background:#e8f1f9;border-radius:4px;"></div>
<div class="t" style="left:1104.0px;top:955px;font-size:12px;color:#1b7bbf;transform:scaleX(1.1053);transform-origin:0 0;">Done</div>
<div class="t" style="left:1197.8px;top:952px;font-size:15.0px;color:#94a0b2;transform:scaleX(0.9517);transform-origin:0 0;">GO4YOU</div>
<div class="r" style="left:322px;top:989px;width:1006px;height:1px;background:#e6e6e9;"></div>
<div class="r" style="left:330px;top:998px;width:40px;height:40px;background:#cacaca;border-radius:5px;"></div>
<div class="card" style="left:1377px;top:826px;width:516px;height:260px"></div>
<div class="t" style="left:1402.3px;top:853px;font-size:20px;color:#1d1e28;-webkit-text-stroke:0.2px currentColor;transform:scaleX(1.1463);transform-origin:0 0;">Product Status</div>
<div class="r" style="left:1846.90px;top:861.00px;width:4px;height:4px;border-radius:50%;background:#222"></div>
<div class="r" style="left:1854.00px;top:861.00px;width:4px;height:4px;border-radius:50%;background:#222"></div>
<div class="r" style="left:1861.10px;top:861.00px;width:4px;height:4px;border-radius:50%;background:#222"></div>
<svg style="left:0;top:0" width="1920" height="1001"><path d="M1654.93,908.49 A121,121 0 1 1 1614.99,1147.16 L1622.35,1105.41 A78.6,78.6 0 1 0 1648.30,950.37 Z" fill="#ee7421"/><path d="M1614.99,1147.16 A121,121 0 0 1 1654.93,908.49 L1648.30,950.37 A78.6,78.6 0 0 0 1622.35,1105.41 Z" fill="#1c7bbd"/></svg>
<div class="r" style="left:270px;top:2px;width:1650px;height:67px;background:#f0eff4;"></div>
<div class="r" style="left:1866px;top:0;width:54px;height:1001px;background:linear-gradient(to right,rgba(20,20,50,0),rgba(20,20,50,0.036))"></div>
<div class="t" style="left:296.0px;top:25px;font-size:17px;color:#1f2230;-webkit-text-stroke:0.2px currentColor;transform:scaleX(1.0580);transform-origin:0 0;">Dashboard</div>
<div class="t" style="left:391.5px;top:27px;font-size:14px;color:#8d99ac;">/</div>
<div class="t" style="left:406.2px;top:27px;font-size:14px;color:#8897ab;transform:scaleX(1.1380);transform-origin:0 0;">Ecommerce</div>
</body></html>
